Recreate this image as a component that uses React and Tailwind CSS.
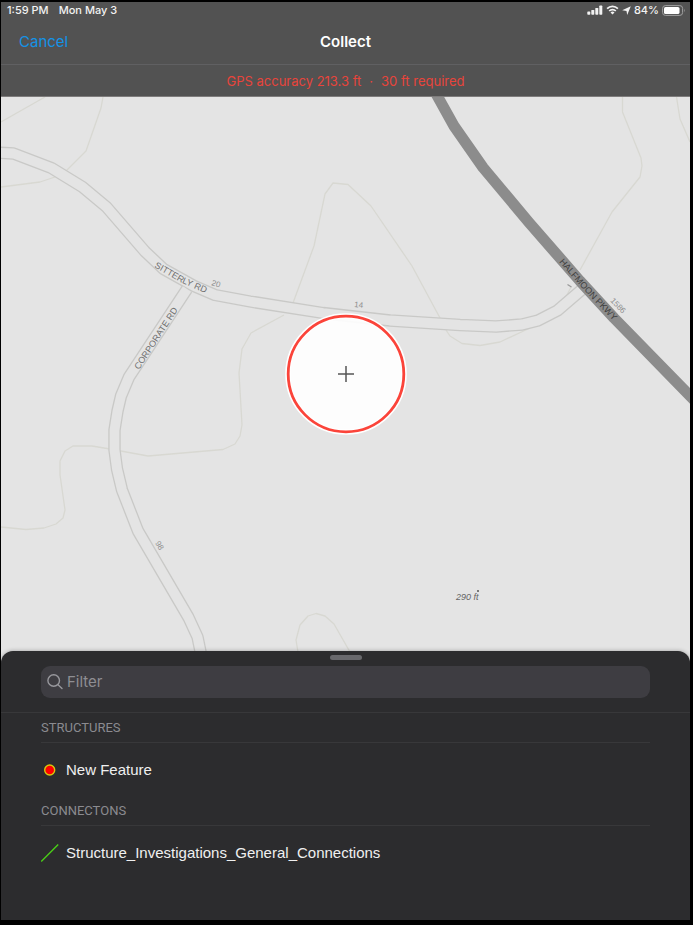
const contours = [
  "M1 122 L45 97",
  "M103 97 L101 108 L86 151 L66 171",
  "M1 187 L40 182 L55 177",
  "M293 303 L314 246 L325 194 L333 183 L348 184.5 L371 206 L412 266 L440 318",
  "M284 315 L251 333 L242 349 L239 373 L240 390 L242 425 L240 436 L235 444 L223 449.5 L148 456 L110 449 L92 446 L73 446 L65 451 L60 461 L60 475 L65 510 L63 518 L56 524 L44 528 L26 529.5 L1 527",
  "M446 330 L450 336 L462 343.5 L480 345.5 L500 342 L530 328",
  "M580 270 L612 212 L640 177 L642 166 L641 158 L622.5 112 L622.5 97",
  "M676.5 97 L680 119 L690 142",
  "M298 652 L296 640 L300 625 L308 616 L316 613.5 L325 616 L334 624 L350 652",
  "M571 287 L566 297",
];

const sitterly =
  "M-4 152.5 L13.5 153.5 L51.5 168 L82.5 187 L106.5 207 L145 251.5 L163.5 269 L194 286 L215 295 L250 301.5 L323 313 L390 320.5 L460 325 L496 326.5 L522 324.5 L538 320.5 L557.5 310.5 L586 286";
const corporate =
  "M187 289 L129 377 L121 396 L117.5 411 L114.5 430 L114.5 450 L117 469 L122 490 L138 531 L188.5 617.5 L197.5 637 L201 654";
const parkway = "M434 90 L454 126 L483 167.5 L529 222.5 L580 281 L614 318 L696 402";

function MapView() {
  return (
    <svg
      className="absolute inset-0 h-full w-full"
      viewBox="1 97 689 554"
      preserveAspectRatio="xMidYMid slice"
      fill="none"
      fontFamily="'Liberation Sans', Arial, sans-serif"
      role="img"
      aria-label="Map"
    >
      <g stroke="#d8d8d2" strokeWidth="1.3" strokeLinejoin="round">
        {contours.map((d) => (
          <path key={d} d={d} />
        ))}
      </g>
      <g stroke="#c9c9c7" strokeWidth="12.4" strokeLinejoin="round">
        <path d={sitterly} />
        <path d={corporate} />
      </g>
      <g stroke="#e4e4e4" strokeWidth="9.8" strokeLinejoin="round">
        <path d={sitterly} />
        <path d={corporate} />
      </g>
      <path d={parkway} stroke="#8c8c8c" strokeWidth="11" strokeLinejoin="round" />
      <defs>
        <path id="sitterly-label" d="M154 267 L180 282 L214 297" />
        <path id="parkway-label" d="M559 262 L582 288 L622 330" />
      </defs>
      <g fill="#6f6f6f" fontSize="9">
        <text>
          <textPath href="#sitterly-label">SITTERLY RD</textPath>
        </text>
        <text transform="translate(139 370) rotate(-57)">CORPORATE RD</text>
      </g>
      <text fill="#3f3f3f" fontSize="9">
        <textPath href="#parkway-label">HALFMOON PKWY</textPath>
      </text>
      <g fill="#8f8f8f" fontSize="8">
        <text transform="translate(211 285) rotate(18)">20</text>
        <text transform="translate(354 307) rotate(6)">14</text>
        <text transform="translate(155 543) rotate(60)">98</text>
        <text transform="translate(610 301) rotate(46)">1586</text>
      </g>
      <path d="M567.5 284.5 L571.5 287" stroke="#9a9a9a" strokeWidth="1.2" />
      <text x="456" y="600" fill="#666" fontSize="9" fontStyle="italic">
        290 ft
      </text>
      <circle cx="478" cy="591" r="1" fill="#555" />
    </svg>
  );
}

function Reticle() {
  return (
    <svg
      className="absolute left-1/2 top-1/2 h-[122px] w-[122px] -translate-x-1/2 -translate-y-1/2"
      viewBox="0 0 122 122"
      fill="none"
      aria-hidden="true"
    >
      <circle cx="61" cy="61" r="58" fill="#fff" fillOpacity="0.9" />
      <circle cx="61" cy="61" r="58" stroke="#fff" strokeWidth="5.6" />
      <circle cx="61" cy="61" r="57.8" stroke="#fb443a" strokeWidth="2.8" />
      <path d="M53 61 h16 M61 53 v16" stroke="#555" strokeWidth="1.5" />
    </svg>
  );
}

function StatusBar() {
  return (
    <div className="flex h-4 items-center justify-between pl-1.5 pr-1 text-[11px] leading-4 font-medium text-[#f2f2f2]">
      <div className="flex gap-2.5">
        <span>1:59 PM</span>
        <span>Mon May 3</span>
      </div>
      <div className="flex items-center gap-[3px]">
        <svg className="h-[10px] w-4" viewBox="0 0 16 10" fill="#f2f2f2" aria-hidden="true">
          <rect x="0.3" y="6.4" width="3" height="3.3" rx="0.7" />
          <rect x="4.3" y="4.9" width="3" height="4.8" rx="0.7" />
          <rect x="8.3" y="2.9" width="3" height="6.8" rx="0.7" />
          <rect x="12.3" y="0.6" width="3" height="9.1" rx="0.7" />
        </svg>
        <svg className="h-[10px] w-[13px]" viewBox="0 0 12 10" fill="none" stroke="#f2f2f2" strokeWidth="1.7" aria-hidden="true">
          <path d="M0.6 3.7 A7.6 7.6 0 0 1 11.4 3.7" />
          <path d="M2.7 6 A4.6 4.6 0 0 1 9.3 6" />
          <path d="M6 9.6 L4 7.6 A2.8 2.8 0 0 1 8 7.6 Z" fill="#f2f2f2" stroke="none" />
        </svg>
        <svg className="h-[9px] w-[9px]" viewBox="0 0 9 9" fill="#f2f2f2" aria-hidden="true">
          <path d="M8.8 0.2 L5.2 8.9 L4.5 4.9 L0.2 4.3 Z" />
        </svg>
        <span>84%</span>
        <svg className="h-[11px] w-6" viewBox="0 0 24 11" fill="none" aria-hidden="true">
          <rect x="0.6" y="0.6" width="20" height="9.8" rx="2.8" stroke="#a0a0a0" strokeWidth="1" />
          <rect x="2" y="2" width="15.5" height="7" rx="1.6" fill="#fff" />
          <path d="M22 3.8 q1.4 1.7 0 3.4 z" fill="#a0a0a0" />
        </svg>
      </div>
    </div>
  );
}

function Group({ title, name, children }) {
  return (
    <section className="px-10">
      <h2 className="flex h-[30px] items-center border-b border-[#38383a] font-['Roboto','Liberation_Sans',sans-serif] text-[13px] leading-4 font-normal text-[#8b8b90]">
        {title}
      </h2>
      <button
        type="button"
        className="flex h-[53px] w-full items-center gap-[7px] text-left font-['Liberation_Sans',Arial,sans-serif] text-[15px] leading-5 text-[#f0f0f0]"
      >
        {children}
        <span>{name}</span>
      </button>
    </section>
  );
}

export default function App() {
  return (
    <div className="flex min-h-screen flex-col bg-black pt-[2px] pr-[3px] pb-[5px] pl-px font-['Inter','Liberation_Sans',sans-serif]">
      <header className="border-b border-[#7e7c7c] bg-[#525252]">
        <StatusBar />
        <div className="grid h-[46px] grid-cols-3 items-center px-[18px] pt-px text-[15px] leading-5">
          <button type="button" className="justify-self-start text-[#1493e6]">
            Cancel
          </button>
          <h1 className="text-center font-semibold text-white">Collect</h1>
        </div>
        <p className="flex h-8 items-center justify-center gap-2 border-t border-[#606062] text-[13px] leading-4 text-[#e8443b]">
          <span>GPS accuracy 213.3 ft</span>
          <span>·</span>
          <span>30 ft required</span>
        </p>
      </header>

      <main className="flex flex-1 flex-col bg-[#e4e4e4]">
        <div className="relative min-h-80 flex-1 overflow-hidden">
          <MapView />
          <Reticle />
        </div>

        <div className="relative rounded-t-xl bg-[#2c2c2e] pb-[41px] shadow-[0_0_4px_rgba(0,0,0,0.3)]">
          <div className="flex justify-center pt-1">
            <div className="h-[5px] w-8 rounded-full bg-[#69696d]" />
          </div>
          <div className="border-b border-[#38383a] px-10 pt-1.5 pb-3.5">
            <label className="flex h-8 items-center gap-1 rounded-[9px] bg-[#3e3d42] px-1.5">
              <svg className="h-4 w-4" viewBox="0 0 16 16" fill="none" stroke="#98989d" strokeWidth="1.4" strokeLinecap="round" aria-hidden="true">
                <circle cx="6.7" cy="6.5" r="5.8" />
                <path d="M11 10.8 L15 14.6" />
              </svg>
              <input
                type="text"
                aria-label="Filter"
                placeholder="Filter"
                className="min-w-0 flex-1 bg-transparent text-[15px] leading-5 text-white outline-none placeholder:text-[#8e8e93]"
              />
            </label>
          </div>
          <Group title="STRUCTURES" name="New Feature">
            <svg className="h-[18px] w-[18px]" viewBox="0 0 18 18" aria-hidden="true">
              <circle cx="8.7" cy="9" r="5" fill="#fe0000" stroke="#d9c80c" strokeWidth="1.4" />
            </svg>
          </Group>
          <Group title="CONNECTONS" name="Structure_Investigations_General_Connections">
            <svg className="h-[18px] w-[18px]" viewBox="0 0 18 18" aria-hidden="true">
              <path d="M0.2 17.5 L17.2 0.5" stroke="#4ad017" strokeWidth="1.4" />
            </svg>
          </Group>
        </div>
      </main>
    </div>
  );
}
